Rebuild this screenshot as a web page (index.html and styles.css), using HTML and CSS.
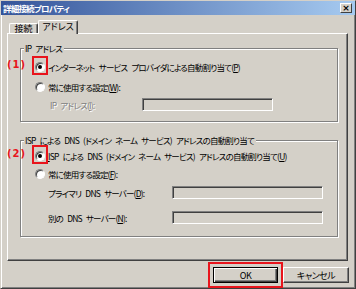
FILE: index.html
```html
<!DOCTYPE html>
<html lang="ja">

<head>
  <meta charset="UTF-8">
  <meta name="viewport" content="width=device-width, initial-scale=1.0">
  <link rel="stylesheet" href="styles.css">
  <title>詳細接続プロパティ</title>
</head>

<body>

  <div class="window">
    <div class="titlebar">
      <span class="title">詳細接続プロパティ</span>
      <span class="close">×</span>
    </div>

    <div class="tabs">
      <div class="tab">接続</div>
      <div class="tab active">アドレス</div>
    </div>

    <div class="panel">
      <div class="group group-ip">
        <div class="group-label">IP アドレス</div>
        <div class="row first">
          <span class="radio checked"><span class="mark"></span><span class="callout">(1)</span></span>
          <span>インターネット サービス プロバイダによる自動割り当て(<u>P</u>)</span>
        </div>
        <div class="row second">
          <span class="radio"></span>
          <span>常に使用する設定(<u>W</u>):</span>
        </div>
        <div class="row field-row ip-row">
          <span class="field-label disabled">IP アドレス(<u>I</u>):</span>
          <span class="field ip-field"></span>
        </div>
      </div>

      <div class="group group-dns">
        <div class="group-label">ISP による DNS (ドメイン ネーム サービス) アドレスの自動割り当て</div>
        <div class="row first">
          <span class="radio checked"><span class="mark"></span><span class="callout">(2)</span></span>
          <span><u>I</u>SP による DNS (ドメイン ネーム サービス) アドレスの自動割り当て(<u>U</u>)</span>
        </div>
        <div class="row second">
          <span class="radio"></span>
          <span>常に使用する設定(<u>F</u>):</span>
        </div>
        <div class="row field-row dns-row">
          <span class="field-label">プライマリ DNS サーバー(<u>D</u>):</span>
          <span class="field dns-field"></span>
        </div>
        <div class="row field-row dns-row alt">
          <span class="field-label">別の DNS サーバー(<u>N</u>):</span>
          <span class="field dns-field"></span>
        </div>
      </div>
    </div>

    <div class="buttons">
      <button class="btn default">OK</button>
      <button class="btn cancel">キャンセル</button>
    </div>
  </div>

</body>

</html>
```

FILE: styles.css
```css
* {
  box-sizing: border-box;
}

body {
  margin: 0;
  background-color: #d4d0c8;
  font-family: "Noto Sans CJK JP", sans-serif;
  font-size: 8.5px;
  font-feature-settings: "palt";
  letter-spacing: -0.8px;
  word-spacing: 3px;
  color: #000;
}

u {
  text-decoration-thickness: 1px;
  text-underline-offset: 1px;
}

.window {
  width: 356px;
  height: 289px;
  border: 1px solid;
  border-color: #d4d0c8 #404040 #404040 #d4d0c8;
  box-shadow: inset 1px 1px #fff, inset -1px -1px #808080;
}

.titlebar {
  display: flex;
  align-items: center;
  justify-content: space-between;
  height: 14px;
  padding: 0 3px 0 2px;
  background: linear-gradient(to right, #34549a, #a6caf0);
  color: #fff;
  font-size: 8.5px;
  font-weight: bold;
}

.title {
  line-height: 14px;
}

.close {
  width: 12px;
  height: 10px;
  border: 1px solid;
  border-color: #fff #404040 #404040 #fff;
  background-color: #d4d0c8;
  color: #000;
  font-family: "DejaVu Sans", sans-serif;
  font-size: 9px;
  letter-spacing: 0;
  line-height: 8px;
  text-align: center;
}

.tabs {
  display: flex;
  align-items: flex-end;
  height: 18px;
  padding-left: 8px;
}

.tab {
  width: 29px;
  height: 10px;
  border: 1px solid;
  border-bottom: none;
  border-color: #fff #404040 #fff #fff;
  border-radius: 2px 2px 0 0;
  box-shadow: inset -1px 0 #808080;
  font-size: 9px;
  letter-spacing: 0;
  line-height: 9px;
  text-align: center;
  white-space: nowrap;
}

.tab.active {
  position: relative;
  z-index: 1;
  width: 40px;
  height: 14px;
  margin-bottom: -1px;
  background-color: #d4d0c8;
  line-height: 11px;
}

.panel {
  width: 341px;
  height: 228px;
  margin-left: 6px;
  padding: 14px 0 0 12px;
  border: 1px solid;
  border-color: #fff #404040 #404040 #fff;
  box-shadow: inset -1px -1px #808080;
}

.group {
  display: flex;
  flex-direction: column;
  align-items: flex-start;
  width: 318px;
  border: 1px solid #808080;
  box-shadow: 1px 1px #fff, inset 1px 1px #fff;
}

.group-ip {
  height: 74px;
}

.group-dns {
  height: 97px;
  margin-top: 18px;
}

.group-label {
  height: 10px;
  margin: -6px 0 0 3px;
  padding: 0 2px 0 1px;
  background-color: #d4d0c8;
  line-height: 10px;
  white-space: nowrap;
}

.row {
  display: flex;
  align-items: center;
  height: 14px;
  padding-left: 14px;
  white-space: nowrap;
}

.group-ip .first {
  margin-top: 7px;
}

.group-ip .second {
  margin-top: 6px;
}

.group-dns .first {
  margin-top: 4px;
}

.group-dns .second {
  margin-top: 4px;
}

.radio {
  position: relative;
  flex: none;
  width: 10px;
  height: 10px;
  margin-right: 3px;
  border: 1px solid;
  border-color: #808080 #fff #fff #808080;
  border-radius: 50%;
  background-color: #fff;
  box-shadow: inset 1px 1px #404040;
}

.radio.checked::after {
  content: "";
  position: absolute;
  left: 2px;
  top: 2px;
  width: 4px;
  height: 4px;
  border-radius: 50%;
  background-color: #000;
}

/* red annotation frames drawn over the screenshot */
.mark {
  position: absolute;
  left: -4px;
  top: -7px;
  width: 16px;
  height: 19px;
  border: 2px solid #e8141c;
}

.callout {
  position: absolute;
  left: -29px;
  top: -3px;
  color: #e8141c;
  font-family: "DejaVu Sans", sans-serif;
  font-size: 10px;
  font-weight: bold;
  letter-spacing: 1px;
  line-height: 10px;
}

.field-row {
  height: 13px;
}

.ip-row {
  margin-top: 4px;
  padding-left: 29px;
}

.dns-row {
  margin-top: 5px;
  padding-left: 27px;
}

.dns-row.alt {
  margin-top: 12px;
}

.field-label {
  flex: none;
}

.ip-row .field-label {
  width: 92px;
}

.dns-row .field-label {
  width: 124px;
}

.disabled {
  color: #808080;
  text-shadow: 1px 1px #fff;
}

.field {
  height: 13px;
  border: 1px solid;
  border-color: #808080 #fff #fff #808080;
  background-color: #d4d0c8;
  box-shadow: inset 1px 1px #404040, inset -1px -1px #d4d0c8;
}

.ip-field {
  width: 131px;
}

.dns-field {
  width: 151px;
}

.buttons {
  display: flex;
  justify-content: flex-end;
  gap: 5px;
  margin-top: 6px;
  padding-right: 6px;
}

.btn {
  height: 16px;
  padding: 0;
  border: 1px solid;
  border-color: #fff #404040 #404040 #fff;
  background-color: #d4d0c8;
  box-shadow: inset -1px -1px #808080;
  font-family: inherit;
  font-size: 9px;
  font-feature-settings: "palt";
  letter-spacing: -0.5px;
  color: #000;
}

.btn.default {
  width: 65px;
  border-color: #000;
  box-shadow: inset 1px 1px #fff, inset -1px -1px #404040, inset -2px -2px #808080;
  outline: 2px solid #e8141c;
  outline-offset: 3px;
}

.btn.cancel {
  width: 66px;
}
```
